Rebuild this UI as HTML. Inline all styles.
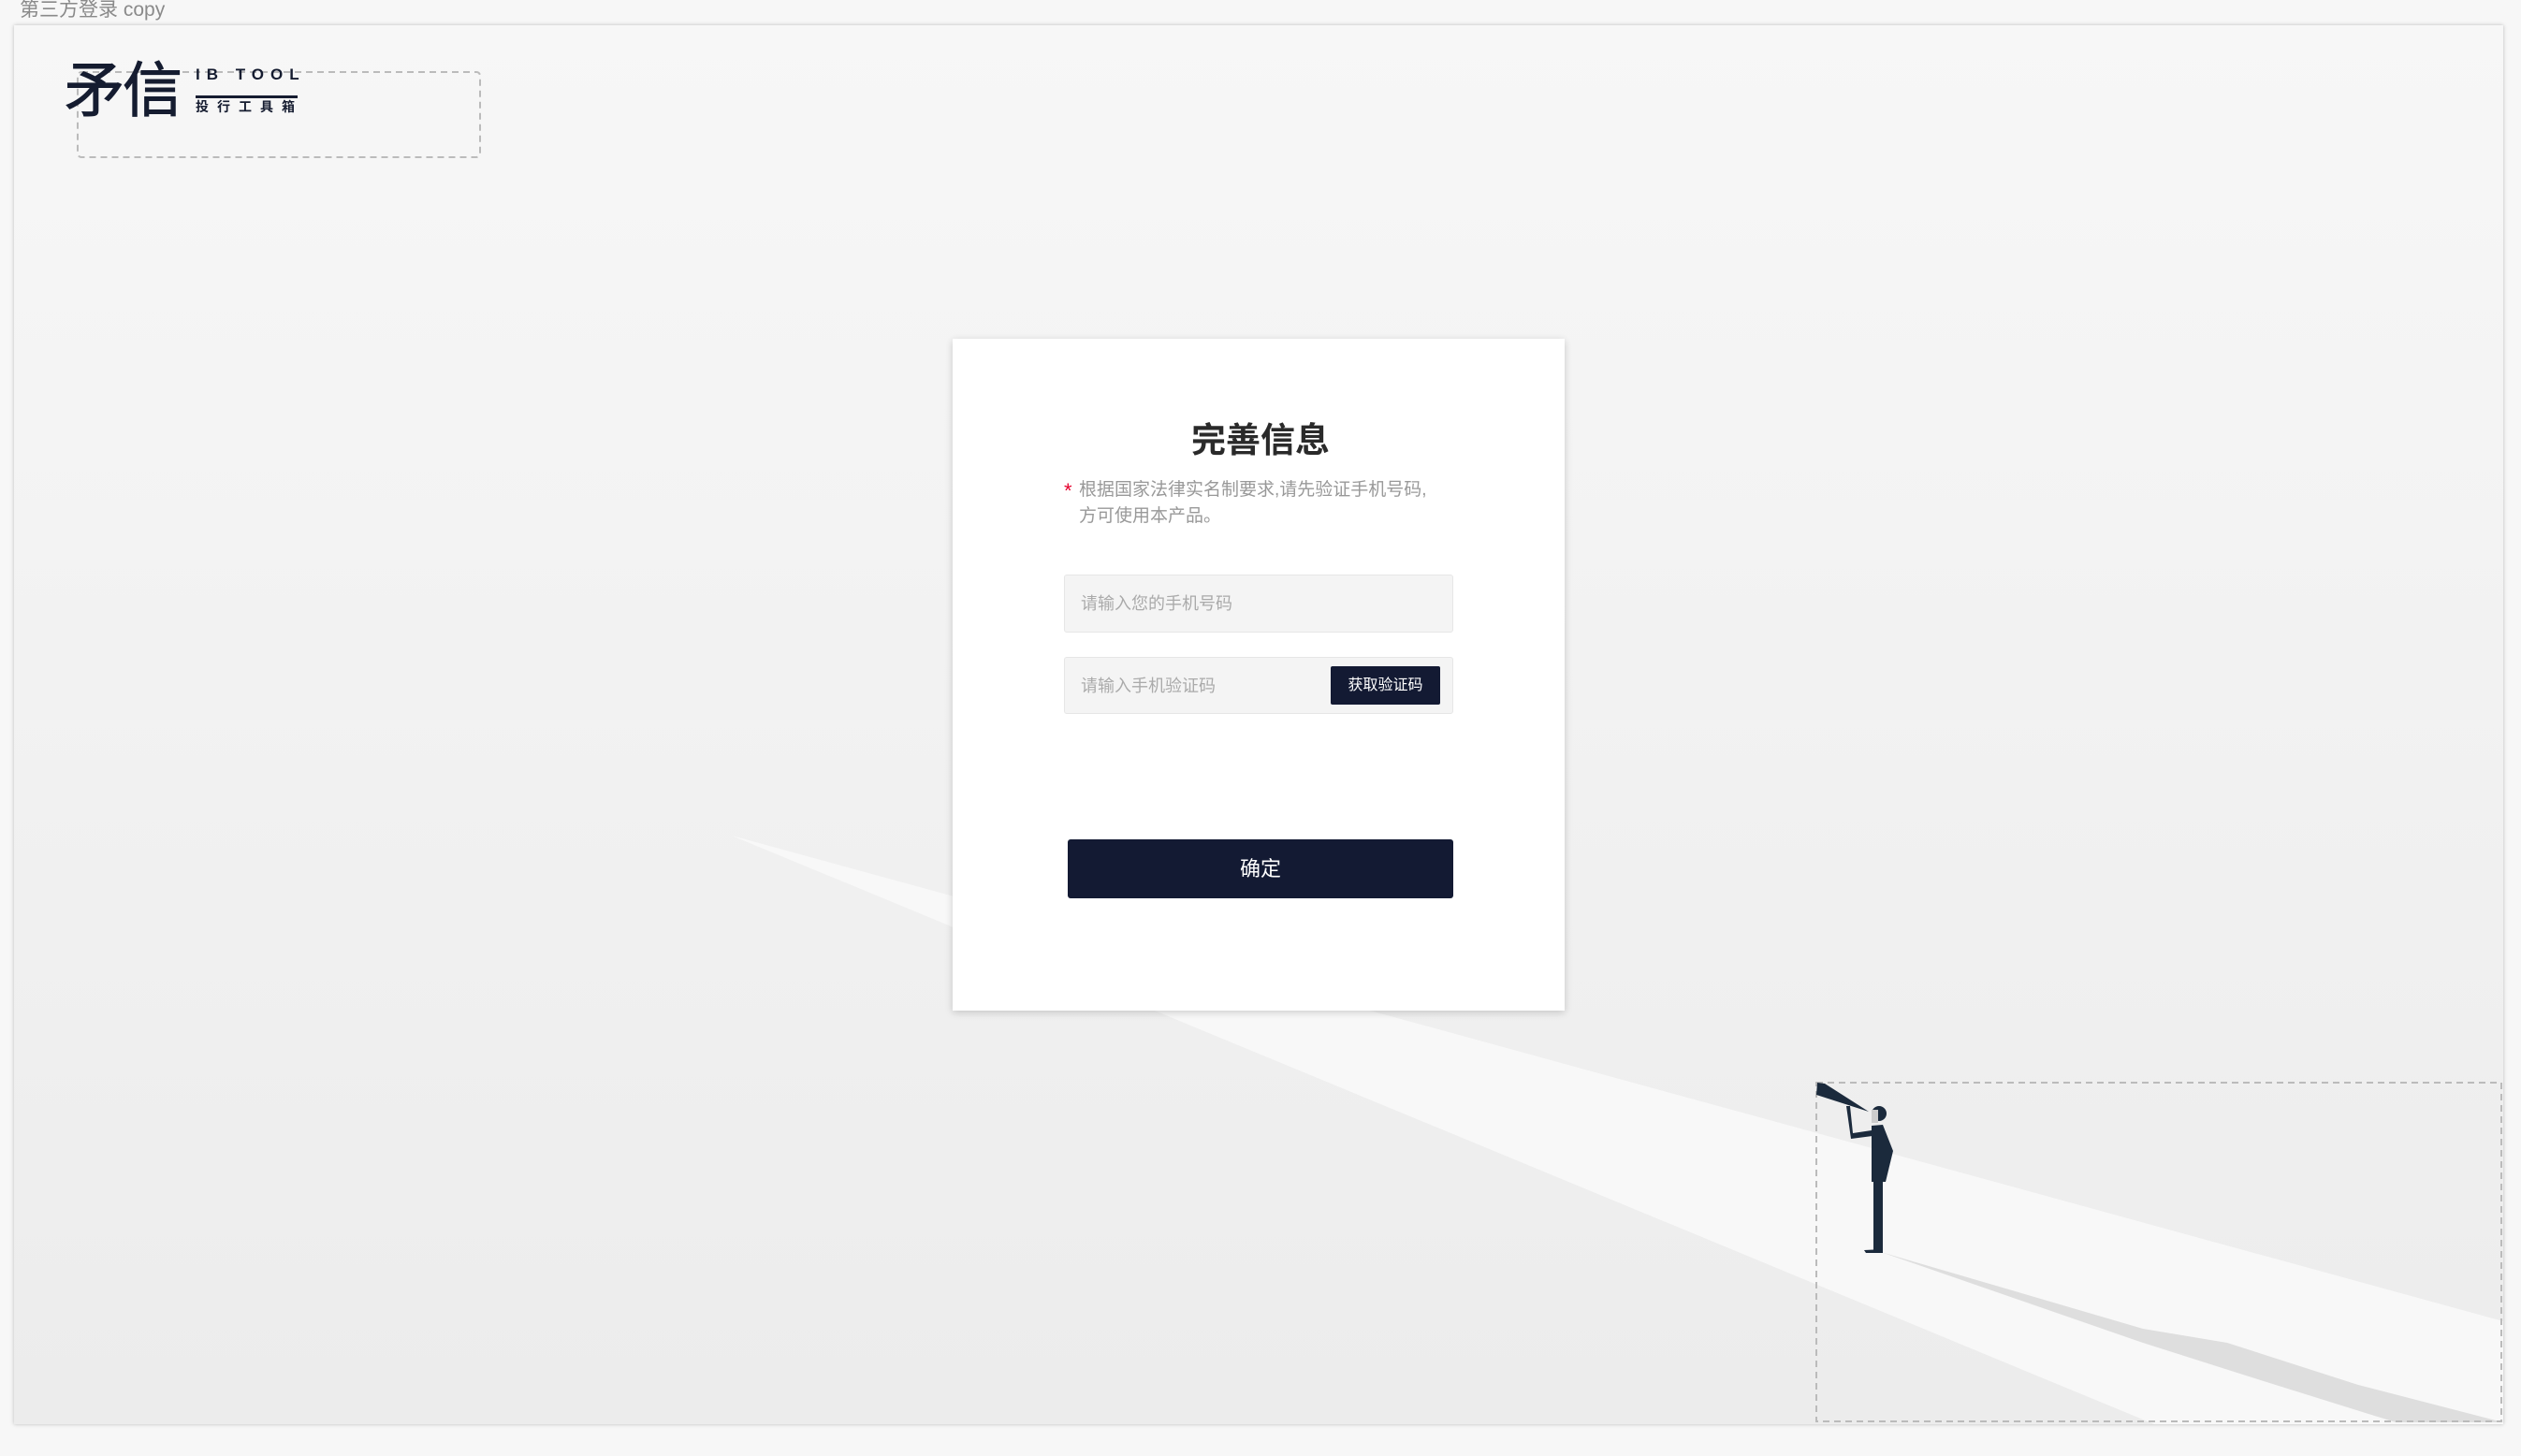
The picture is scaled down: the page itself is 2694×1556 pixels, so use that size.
<!DOCTYPE html>
<html><head><meta charset="utf-8"><style>
*{margin:0;padding:0;box-sizing:border-box}
body{width:2694px;height:1556px;background:#f7f7f7;position:relative;overflow:hidden;font-family:"Liberation Sans","Noto Sans CJK SC",sans-serif}
.lbl{position:absolute;left:21px;top:-6px;font-size:21px;color:#8a8a8a}
.art{position:absolute;left:15px;top:27px;width:2660px;height:1495px;background:linear-gradient(#f7f7f7,#ececec);box-shadow:0 0 4px rgba(0,0,0,.25);overflow:hidden}
.card{position:absolute;left:1018px;top:362px;width:654px;height:718px;background:#fff;box-shadow:0 2px 8px rgba(0,0,0,.18)}
.t{position:absolute;left:0;width:100%;top:440px;text-align:center;font-size:37px;font-weight:bold;color:#2a2a2a}
.note{position:absolute;left:1153px;top:510px;font-size:19px;line-height:28px;color:#999;width:420px}
.star{position:absolute;left:1137px;top:512px;color:#e5002d;font-size:22px}
.inp{position:absolute;left:1137px;width:416px;height:62px;background:#f4f4f4;border:1px solid #e6e6e6;border-radius:3px;font-size:18px;color:#aaa;padding-left:17px;line-height:60px}
.btn{position:absolute;left:1422px;top:712px;width:117px;height:41px;background:#131a33;border-radius:2px;color:#fff;font-size:16px;text-align:center;line-height:41px}
.ok{position:absolute;left:1141px;top:897px;width:412px;height:63px;background:#131a33;border-radius:3px;color:#fff;font-size:22px;text-align:center;line-height:63px}
</style></head><body>
<div class="lbl">第三方登录 copy</div>
<div class="art">
<svg width="2660" height="1495" style="position:absolute;left:0;top:0" viewBox="15 27 2660 1495">
<polygon points="782,893 2675,1412 2675,1522 2302,1522" fill="#f8f8f8"/>
<polygon points="2010,1338 2290,1420 2380,1435 2520,1480 2675,1520 2560,1520 2400,1470 2290,1435" fill="#dedede"/>
<rect x="83" y="77" width="430" height="91" rx="4" fill="none" stroke="#bbb" stroke-width="2" stroke-dasharray="7 5"/>
<rect x="1941" y="1157" width="732" height="362" fill="none" stroke="#bbb" stroke-width="2" stroke-dasharray="7 5"/>
<g fill="#1b2a3c">
<polygon points="1942,1157 1950,1158 1997,1188 1941,1170"/>
<polygon points="1973,1182 1977,1182 1980,1211 2000,1208 2001,1214 1978,1217"/>
<circle cx="2008" cy="1190" r="8"/>
<polygon points="2000,1203 2012,1202 2023,1230 2015,1263 2000,1263"/>
<rect x="2002" y="1262" width="10" height="75"/>
<polygon points="1992,1336 2012,1335 2012,1339 1994,1339"/>
</g>
<rect x="2000" y="1186" width="7" height="14" fill="#ccc"/>
</svg>
</div>
<div style="position:absolute;left:69px;top:62px;font-size:64px;color:#151c30;letter-spacing:-2px;line-height:70px;-webkit-text-stroke:1px #151c30">矛信</div>
<div style="position:absolute;left:209px;top:70px;font-size:17px;font-weight:bold;color:#151c30;letter-spacing:7px">IB TOOL</div>
<div style="position:absolute;left:209px;top:102px;width:109px;height:3px;background:#151c30"></div>
<div style="position:absolute;left:209px;top:104px;font-size:14px;font-weight:bold;color:#151c30;letter-spacing:9px">投行工具箱</div>
<div class="card"></div>
<div class="t">完善信息</div>
<div class="star">*</div>
<div class="note">根据国家法律实名制要求,请先验证手机号码,<br>方可使用本产品。</div>
<div class="inp" style="top:614px">请输入您的手机号码</div>
<div class="inp" style="top:702px;height:61px">请输入手机验证码</div>
<div class="btn">获取验证码</div>
<div class="ok">确定</div>
</body></html>
